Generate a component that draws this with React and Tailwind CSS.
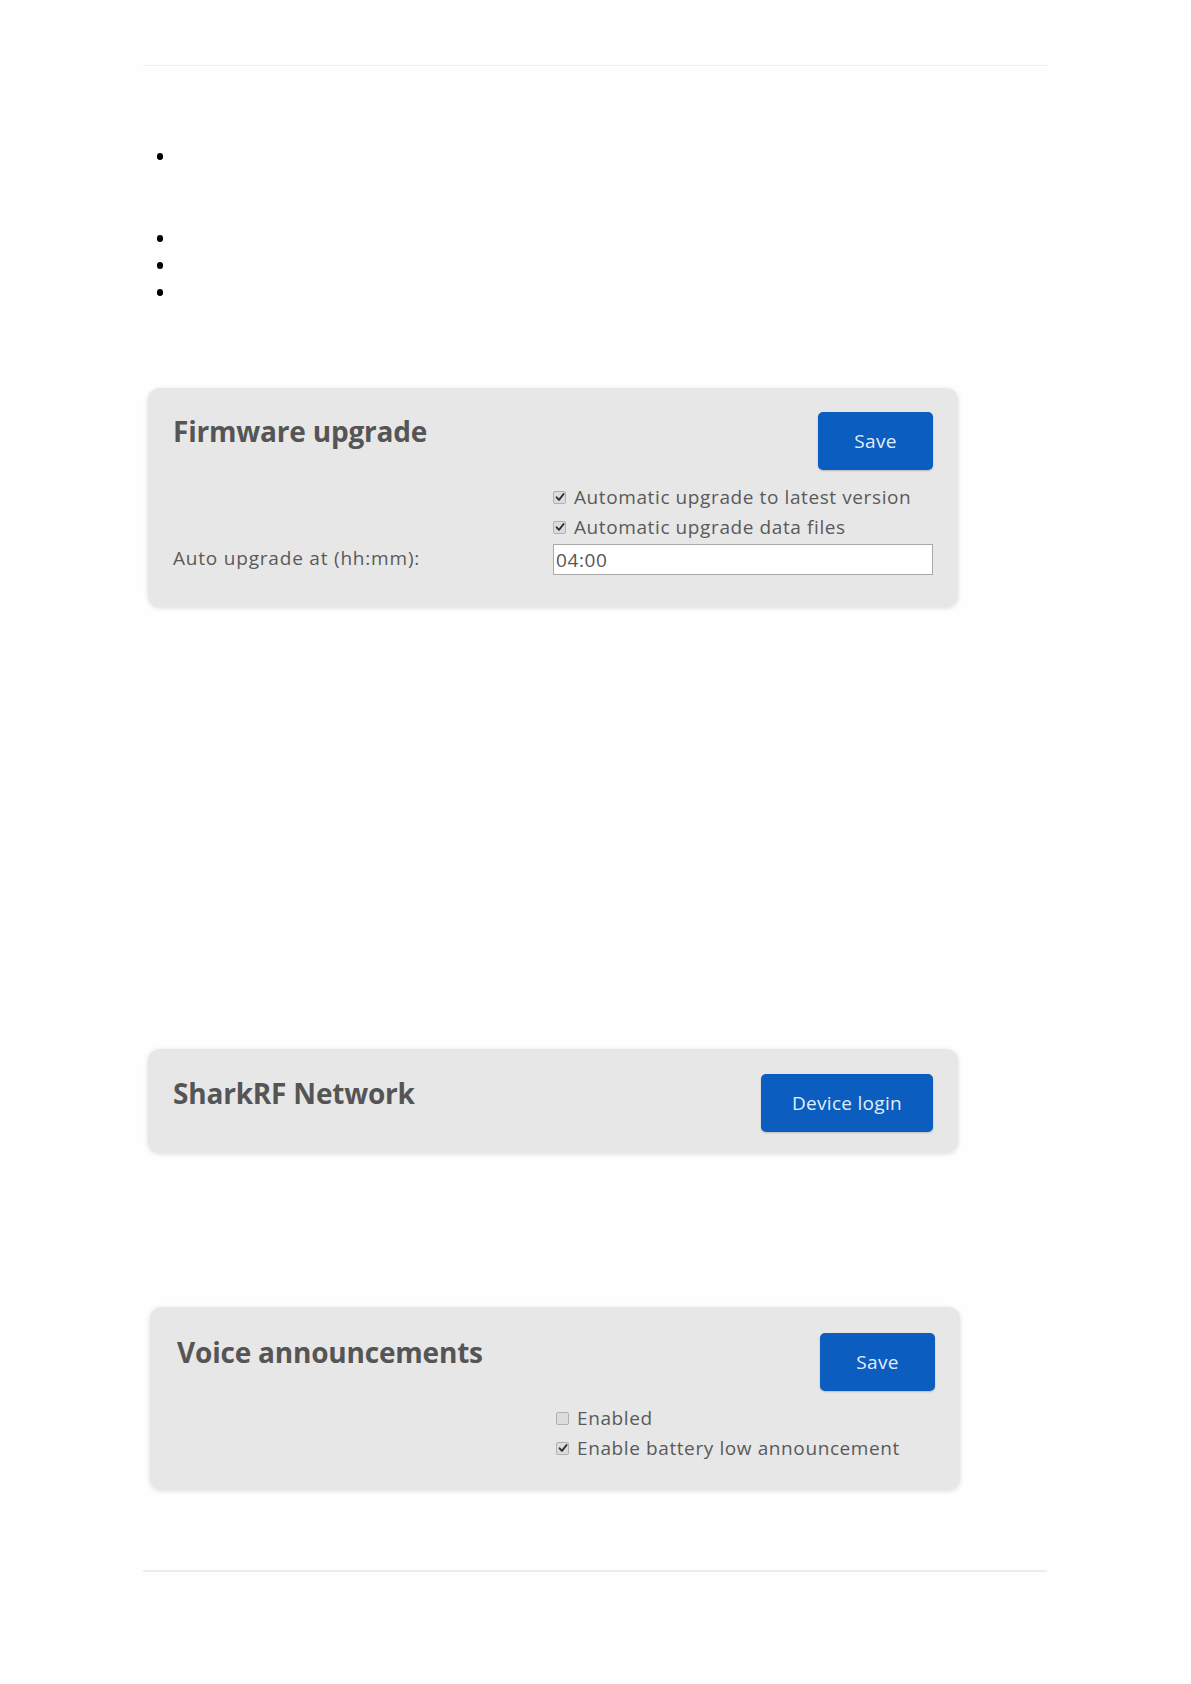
import React from 'react';

const font = { fontFamily: '"Open Sans", "Noto Sans", sans-serif' };

const Check = ({ checked }) => (
  <span className="flex h-[13px] w-[13px] shrink-0 items-center justify-center rounded-[2px] border border-[#b0b0b0] bg-[#dcdcdc]">
    {checked && (
      <svg viewBox="0 0 10 10" className="h-[10px] w-[10px]">
        <path d="M1.6 5.3 L4 7.8 L8.6 2" fill="none" stroke="#2e2e2e" strokeWidth="1.9" strokeLinecap="round" strokeLinejoin="round" />
      </svg>
    )}
  </span>
);

const CheckRow = ({ checked, label }) => (
  <div className="flex h-[30px] items-center">
    <Check checked={checked} />
    <span className="ml-[8px] text-[19px] leading-none tracking-[0.6px] text-[#5a5a5a]">{label}</span>
  </div>
);

const BlueButton = ({ children, className = '' }) => (
  <button className={`h-[58px] rounded-[5px] bg-[#0b5dbf] text-[19px] tracking-[0.3px] text-[#e3edf9] shadow-[0_1px_2px_rgba(0,0,0,0.2)] ${className}`}>
    {children}
  </button>
);

const Card = ({ children, className = '' }) => (
  <div className={`w-[810px] rounded-[12px] bg-[#e7e7e7] shadow-[0_1px_5px_rgba(0,0,0,0.14)] ${className}`}>
    {children}
  </div>
);

const Title = ({ children }) => (
  <h2 className="mt-[1px] text-[28px] font-bold leading-[36px] tracking-[-0.2px] text-[#555555]">{children}</h2>
);

export default function App() {
  return (
    <div className="min-h-[1684px] bg-[#fefefe]" style={font}>
      <div className="ml-[143px] w-[904px] pt-[65px]">
        <div className="border-t border-[#efefef]" />

        <ul className="mt-[77px]">
          <li className="flex h-[82px] items-start pt-[10px]">
            <span className="ml-[14px] h-[7px] w-[6px] rounded-full bg-black" />
          </li>
          {[0, 1, 2].map((i) => (
            <li key={i} className="flex h-[27px] items-center">
              <span className="ml-[14px] h-[7px] w-[6px] rounded-full bg-black" />
            </li>
          ))}
        </ul>

        {/* Firmware upgrade */}
        <Card className="ml-[5px] mt-[82px] px-[25px] pb-[32px] pt-[24px]">
          <div className="flex items-start justify-between">
            <Title>Firmware upgrade</Title>
            <BlueButton className="w-[115px]">Save</BlueButton>
          </div>
          <div className="mt-[12px] grid grid-cols-[380px_380px]">
            <div />
            <div>
              <CheckRow checked label="Automatic upgrade to latest version" />
              <CheckRow checked label="Automatic upgrade data files" />
            </div>
            <div className="flex items-center text-[19px] tracking-[0.8px] text-[#5a5a5a]">Auto upgrade at (hh:mm):</div>
            <input
              readOnly
              value="04:00"
              className="mt-[2px] h-[31px] w-[380px] border border-[#a9a9a9] bg-white px-[2px] text-[19px] tracking-[0.6px] text-[#555555] outline-none"
            />
          </div>
        </Card>

        {/* SharkRF Network */}
        <Card className="ml-[5px] mt-[442px] px-[25px] pb-[21px] pt-[25px]">
          <div className="flex items-start justify-between">
            <Title>SharkRF Network</Title>
            <BlueButton className="w-[172px]">Device login</BlueButton>
          </div>
        </Card>

        {/* Voice announcements */}
        <Card className="ml-[7px] mt-[154px] pb-[27px] pl-[27px] pr-[25px] pt-[26px]">
          <div className="flex items-start justify-between">
            <Title>Voice announcements</Title>
            <BlueButton className="w-[115px]">Save</BlueButton>
          </div>
          <div className="mt-[12px] grid grid-cols-[379px_379px]">
            <div />
            <div>
              <CheckRow label="Enabled" />
              <CheckRow checked label="Enable battery low announcement" />
            </div>
          </div>
        </Card>

        <div className="mt-[80px] border-t-2 border-[#ececec]" />
      </div>
    </div>
  );
}
